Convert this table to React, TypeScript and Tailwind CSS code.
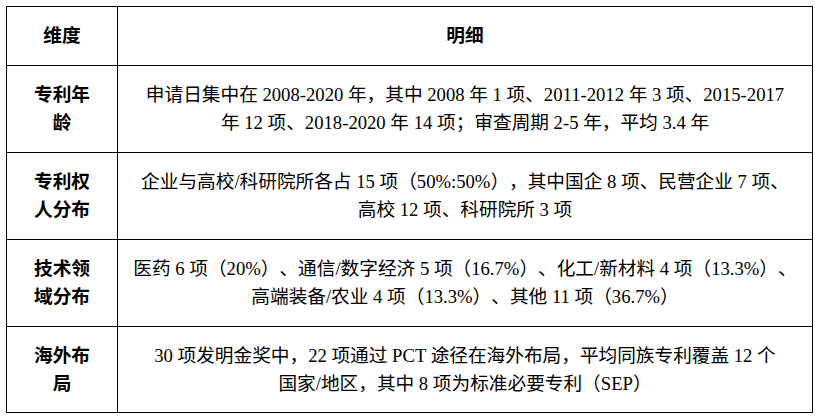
import React from "react";

const rows: { k: string[]; v: string[] }[] = [
  {
    k: ["专利年", "龄"],
    v: [
      "申请日集中在 2008-2020 年，其中 2008 年 1 项、2011-2012 年 3 项、2015-2017",
      "年 12 项、2018-2020 年 14 项；审查周期 2-5 年，平均 3.4 年",
    ],
  },
  {
    k: ["专利权", "人分布"],
    v: [
      "企业与高校/科研院所各占 15 项（50%:50%），其中国企 8 项、民营企业 7 项、",
      "高校 12 项、科研院所 3 项",
    ],
  },
  {
    k: ["技术领", "域分布"],
    v: [
      "医药 6 项（20%）、通信/数字经济 5 项（16.7%）、化工/新材料 4 项（13.3%）、",
      "高端装备/农业 4 项（13.3%）、其他 11 项（36.7%）",
    ],
  },
  {
    k: ["海外布", "局"],
    v: [
      "30 项发明金奖中，22 项通过 PCT 途径在海外布局，平均同族专利覆盖 12 个",
      "国家/地区，其中 8 项为标准必要专利（SEP）",
    ],
  },
];

export default function App() {
  return (
    <div
      className="w-[815px] h-[418px] bg-white pt-[6px] pl-[6px] text-black [text-spacing-trim:space-all]"
      style={{ fontFamily: "'Liberation Serif', 'Noto Sans CJK SC', serif" }}
    >
      <table className="border-collapse table-fixed w-[807px] text-[18.67px] leading-[28px]">
        <colgroup>
          <col className="w-[111px]" />
          <col />
        </colgroup>
        <tbody>
          <tr className="h-[59px]">
            <td className="border border-black text-center align-middle font-bold">维度</td>
            <td className="border border-black text-center align-middle font-bold">明细</td>
          </tr>
          {rows.map((r, i) => (
            <tr key={i} className={i === 3 ? "h-[86px]" : "h-[87px]"}>
              <td className="border border-black text-center align-middle font-bold px-5">
                {r.k.map((l, j) => (
                  <div key={j}>{l}</div>
                ))}
              </td>
              <td className="border border-black text-center align-middle px-2">
                {r.v.map((l, j) => (
                  <div key={j} className="whitespace-nowrap">
                    {l}
                  </div>
                ))}
              </td>
            </tr>
          ))}
        </tbody>
      </table>
    </div>
  );
}
